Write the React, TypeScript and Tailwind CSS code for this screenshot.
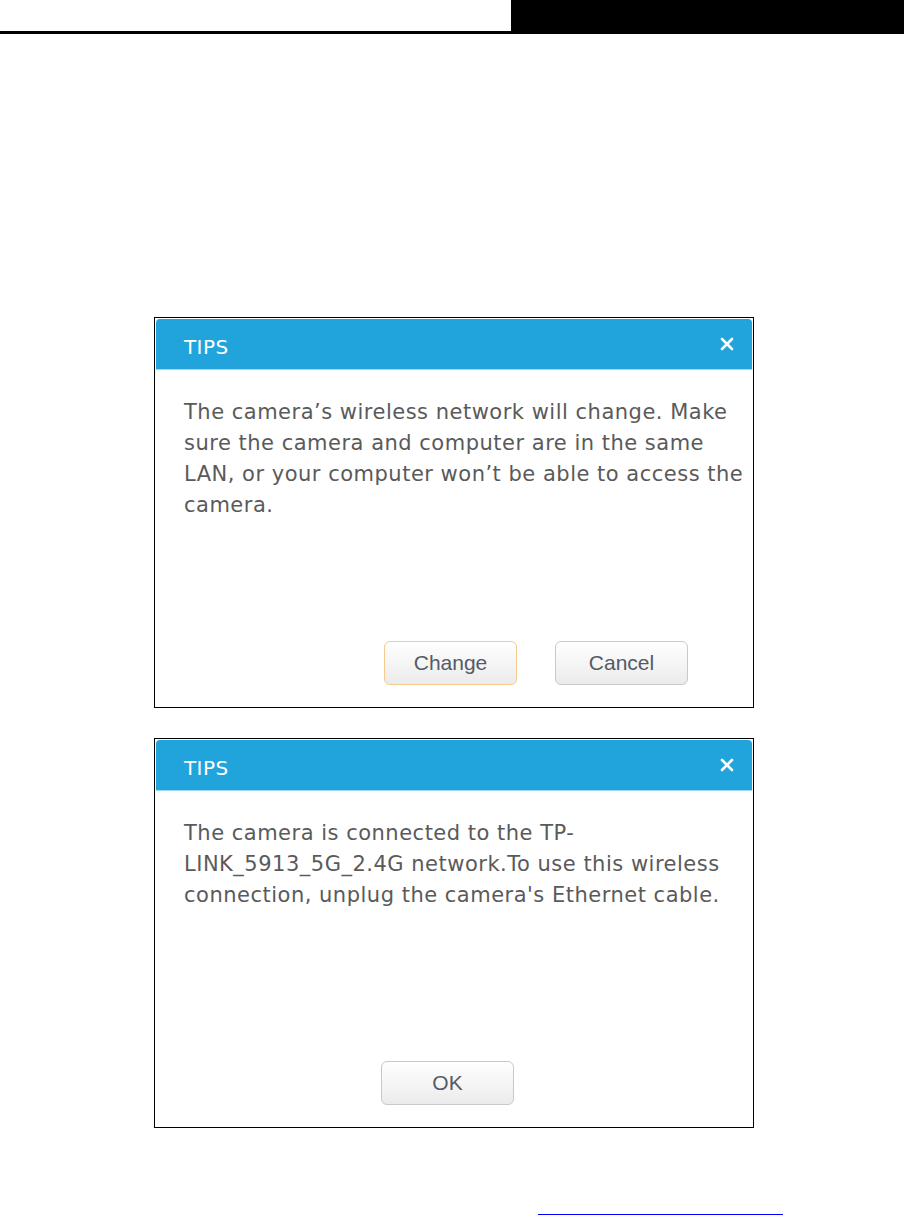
const BODY_FONT = { fontFamily: '"DejaVu Sans", Verdana, sans-serif' };

function CloseIcon() {
  return (
    <svg width="14" height="14" viewBox="0 0 14 14" className="block">
      <path d="M2 2 L12 12 M12 2 L2 12" stroke="#ffffff" strokeWidth="2.6" strokeLinecap="round" />
    </svg>
  );
}

function DialogButton({ label, primary = false }: { label: string; primary?: boolean }) {
  return (
    <button
      className={`flex h-[44px] w-[133px] items-center justify-center rounded-[6px] border bg-gradient-to-b from-white to-[#ebebeb] text-[21px] text-[#545b66] ${
        primary ? "border-[#f6c98c]" : "border-[#c9c9c9]"
      }`}
      style={{ fontFamily: '"Liberation Sans", Arial, sans-serif' }}
    >
      {label}
    </button>
  );
}

function TipsDialog({
  lines,
  children,
  height,
}: {
  lines: string[];
  children: React.ReactNode;
  height: string;
}) {
  return (
    <section className={`flex w-[600px] flex-col border-[1.5px] border-black bg-white ${height}`}>
      <header className="mx-px mt-px flex h-[51px] items-center justify-between rounded-t-[4px] border-b border-[#9fd6f0] bg-[#21a3dc] pl-[28px] pr-[18px]">
        <h2 className="pt-[5px] text-[20px] tracking-[0.4px] text-white" style={BODY_FONT}>
          TIPS
        </h2>
        <CloseIcon />
      </header>
      <div
        className="pl-[29px] pt-[27px] text-[21px] leading-[31px] tracking-[0.5px] text-[#5a5a5a]"
        style={BODY_FONT}
      >
        {lines.map((line) => (
          <p key={line} className="whitespace-nowrap">
            {line}
          </p>
        ))}
      </div>
      <div className="flex-1" />
      {children}
    </section>
  );
}

export default function App() {
  return (
    <div className="min-h-[1215px] w-[904px] bg-white">
      <div className="flex h-[34px]">
        <div className="flex-1 border-b-[3px] border-black" />
        <div className="w-[393px] bg-black" />
      </div>

      <main className="ml-[154px] mt-[283px] flex flex-col gap-[30px]">
        <TipsDialog
          height="h-[391px]"
          lines={[
            "The camera\u2019s wireless network will change. Make",
            "sure the camera and computer are in the same",
            "LAN, or your computer won\u2019t be able to access the",
            "camera.",
          ]}
        >
          <div className="flex justify-end gap-[38px] pb-[22px] pr-[65px]">
            <DialogButton label="Change" primary />
            <DialogButton label="Cancel" />
          </div>
        </TipsDialog>

        <TipsDialog
          height="h-[390px]"
          lines={[
            "The camera is connected to the TP-",
            "LINK_5913_5G_2.4G network.To use this wireless",
            "connection, unplug the camera's Ethernet cable.",
          ]}
        >
          <div className="flex pb-[22px] pl-[226px]">
            <DialogButton label="OK" />
          </div>
        </TipsDialog>
      </main>

      <div className="ml-[538px] mt-[86px] h-px w-[245px] bg-[#0000ff]" />
    </div>
  );
}
